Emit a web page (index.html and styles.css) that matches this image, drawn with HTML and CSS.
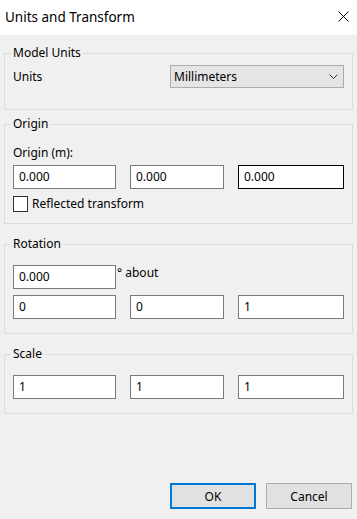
FILE: index.html
```html
<!DOCTYPE html>
<html lang="en">
<head>
<meta charset="utf-8"/>
<title>Units and Transform</title>
<link rel="stylesheet" href="styles.css">
</head>
<body>
<div id="dialog">
    <div id="titlebar">
        <span class="title">Units and Transform</span>
        <svg class="close" width="11" height="11" viewBox="0 0 11 11">
            <path d="M0.5 0.5 L10.5 10.5 M10.5 0.5 L0.5 10.5" stroke="#000" stroke-width="1" fill="none"/>
        </svg>
    </div>
    <div id="content">
        <fieldset class="group" id="model">
            <legend>Model Units</legend>
            <div class="units-row">
                <span>Units</span>
                <div class="select">
                    <span>Millimeters</span>
                    <svg width="9" height="5" viewBox="0 0 9 5">
                        <path d="M0.5 0.5 L4.5 4.5 L8.5 0.5" stroke="#333" stroke-width="1" fill="none"/>
                    </svg>
                </div>
            </div>
        </fieldset>
        <fieldset class="group" id="origin">
            <legend>Origin</legend>
            <div class="label">Origin (m):</div>
            <div class="triple">
                <div class="field">0.000</div>
                <div class="field">0.000</div>
                <div class="field focus">0.000</div>
            </div>
            <div class="check-row">
                <span class="checkbox"></span>
                <span>Reflected transform</span>
            </div>
        </fieldset>
        <fieldset class="group" id="rotation">
            <legend>Rotation</legend>
            <div class="angle-row">
                <div class="field angle">0.000</div>
                <span class="about">&deg; about</span>
            </div>
            <div class="triple second">
                <div class="field">0</div>
                <div class="field">0</div>
                <div class="field">1</div>
            </div>
        </fieldset>
        <fieldset class="group" id="scale">
            <legend>Scale</legend>
            <div class="triple">
                <div class="field">1</div>
                <div class="field">1</div>
                <div class="field">1</div>
            </div>
        </fieldset>
    </div>
    <div id="buttons">
        <button class="btn default">OK</button>
        <button class="btn">Cancel</button>
    </div>
</div>
</body>
</html>
```

FILE: styles.css
```css
html, body {
    margin:0;
    padding:0;
}
body {
    font-family: "Noto Sans", "Open Sans", sans-serif;
    font-size:12px;
    color:#000;
    background:#f0f0f0;
}
#dialog {
    display:flex;
    flex-direction:column;
    width:357px;
    height:519px;
    background:#f0f0f0;
}
#titlebar {
    display:flex;
    align-items:center;
    justify-content:space-between;
    height:35px;
    padding:0 8px 0 5px;
    background:#fff;
}
#titlebar .title {
    font-size:13.5px;
    margin-top:-2px;
}
#titlebar .close {
    display:block;
    margin-top:-2px;
}
#content {
    flex:1;
    padding:0 4px;
}
.group {
    margin:12px 0 0 0;
    padding:13px 8px 14px 8px;
    min-width:0;
    border:1px solid #dcdcdc;
}
.group legend {
    padding:0 2px;
    margin-left:-2px;
    line-height:16px;
}
#model {
    margin-top:10px;
    padding-top:4px;
    padding-bottom:21px;
}
#origin {
    margin-top:6px;
    padding-bottom:11px;
}
.units-row {
    display:flex;
    align-items:center;
    justify-content:space-between;
}
.select {
    display:flex;
    align-items:center;
    justify-content:space-between;
    box-sizing:border-box;
    width:174px;
    height:23px;
    padding:0 5px 0 3px;
    background:#e5e5e5;
    border:1px solid #adadad;
}
.select svg {
    display:block;
}
.label {
    line-height:16px;
    margin-bottom:4px;
}
.triple {
    display:grid;
    grid-template-columns:103px 94px 106px;
    column-gap:14px;
}
.triple.second {
    margin-top:6px;
}
.field {
    box-sizing:border-box;
    height:24px;
    line-height:22px;
    padding:0 5px;
    background:#fff;
    border:1px solid #7a7a7a;
}
.field.focus {
    border-color:#000;
}
.check-row {
    display:flex;
    align-items:center;
    gap:4px;
    height:17px;
    margin-top:6px;
}
.checkbox {
    box-sizing:border-box;
    width:15px;
    height:16px;
    background:#fff;
    border:1px solid #333;
}
.angle-row {
    display:flex;
    align-items:flex-start;
}
.field.angle {
    width:103px;
}
.about {
    line-height:16px;
    padding-left:1px;
}
#buttons {
    display:flex;
    justify-content:flex-end;
    gap:10px;
    padding:0 5px 10px 0;
}
.btn {
    box-sizing:border-box;
    width:86px;
    height:26px;
    margin:0;
    padding:0;
    font-family:inherit;
    font-size:12px;
    color:#000;
    background:#e1e1e1;
    border:1px solid #adadad;
}
.btn.default {
    border:2px solid #0078d7;
}
```
